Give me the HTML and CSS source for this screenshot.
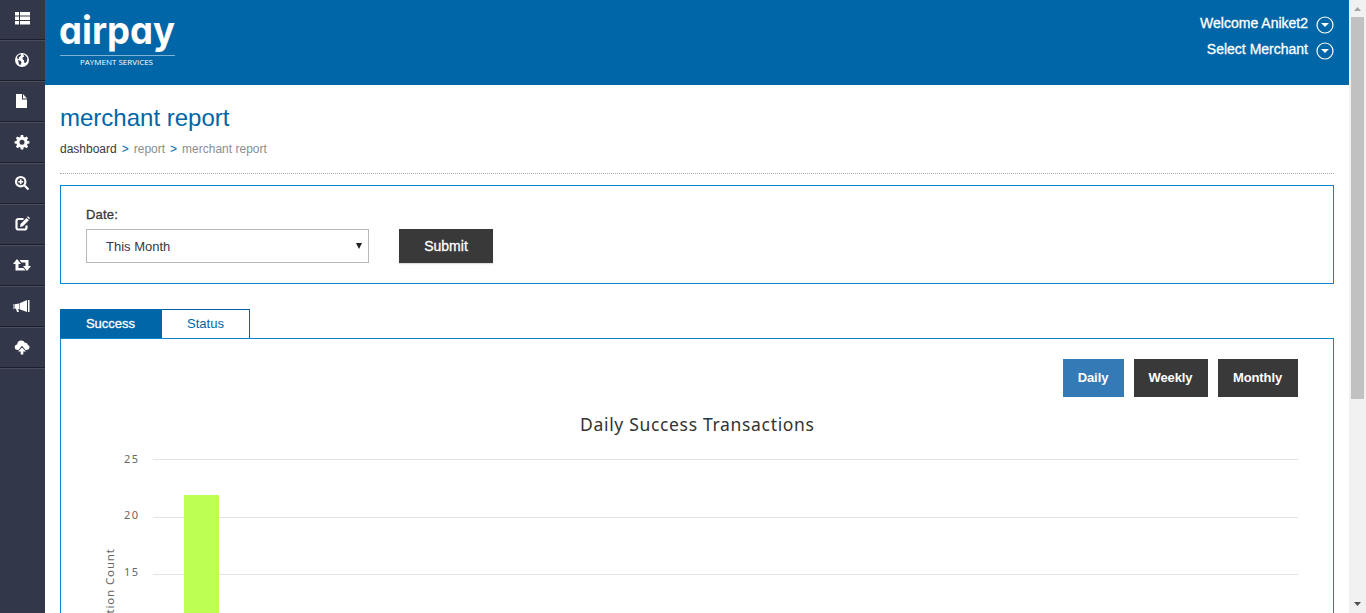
FILE: index.html
```html
<!DOCTYPE html>
<html lang="en">
<head>
<meta charset="utf-8">
<title>merchant report</title>
<link rel="stylesheet" href="styles.css">
</head>
<body>
<div class="app">
  <nav class="sidebar">
    <a class="nav-item"><svg class="icon" viewBox="0 0 16 16"><path d="M1 2h4v3.500H1zM6 2h10v3.500H6zM1 6.500h4V10H1zM6 6.500h10V10H6zM1 11h4v3.500H1zM6 11h10v3.500H6z"/></svg></a>
    <a class="nav-item"><svg class="icon" viewBox="0 0 16 16"><circle cx="8" cy="8" r="7"/><path class="cut" d="M3 5l1.500-2 2-.8.700 1L6 4.500 4.800 5.200 5 6.500 3.800 7.500zM9 2.200l2 .8 2.300 2.700-.3 3.500-1.800 2-1-.8-.2-2.200-1.500-1 .3-2 1.500-.8zM4 8l2.500.8 1 1.500-1.200 3L5 12.200z"/></svg></a>
    <a class="nav-item"><svg class="icon" viewBox="0 0 16 16"><path d="M2 1h6v5.500h5V15H2zM9 1l4 4.500H9z"/></svg></a>
    <a class="nav-item"><svg class="icon" viewBox="0 0 16 16"><path fill-rule="evenodd" d="M6.800 1h2.400l.4 2 1.200.5 1.700-1.100 1.600 1.600L13 5.700l.5 1.200 1.900.3v2.200l-1.900.4-.5 1.200 1.100 1.600-1.600 1.600-1.700-1.100-1.200.5-.4 1.800H6.800l-.4-1.800-1.200-.5-1.700 1.100-1.600-1.600L3 11l-.5-1.200-1.900-.4V7.200l1.900-.3L3 5.700 1.900 4l1.600-1.600 1.700 1.100L6.400 3zM8 5.800a2.500 2.500 0 1 0 0 5 2.500 2.500 0 0 0 0-5z"/></svg></a>
    <a class="nav-item"><svg class="icon" viewBox="0 0 16 16"><circle class="line" cx="6.700" cy="6.700" r="4.700"/><path class="line" d="M10.500 10.500l4 4"/><path class="line thin" d="M6.700 4.200v5M4.200 6.700h5"/></svg></a>
    <a class="nav-item"><svg class="icon" viewBox="0 0 16 16"><path class="line bold" d="M9.500 3H4.500Q2.500 3 2.500 5v6.500q0 2 2 2h6q2 0 2-2V9.500"/><path d="M6.500 8l6-6 2.400 2.200-6 6L6 11zM13 1l1-.7 2 2-.8 1z"/></svg></a>
    <a class="nav-item"><svg class="icon icon-wide" viewBox="0 0 18 16"><path d="M4 2l4 5H5.500v4h5l2 2.500h-10V7H0zM6.500 3h9v6H18l-4 5-4-5h2.500V5.500h-4z"/></svg></a>
    <a class="nav-item"><svg class="icon icon-wide" viewBox="0 0 18 16"><path d="M.5 6h1v5h-1zM2 6.200l4-.8v5.800l-1 .1 1 2.700H4l-1-3.200-1-.2zM6.500 5.300L14 2v12l-7.500-2.800zM15 2h1.500v12H15z"/></svg></a>
    <a class="nav-item"><svg class="icon" viewBox="0 0 16 16"><path d="M4 11Q.7 11 .7 8q0-2.300 2.600-2.800Q3.500 1.500 7.200 1.500q2.600 0 3.700 2.300 2.500-.4 2.800 1.900 1.900.6 1.800 2.600 0 2.700-3.500 2.700h-.5L8 6.800 4.500 11zM8 8.500l4 4H9.300v3H6.700v-3H4z"/></svg></a>
    <div class="nav-end"></div>
  </nav>
  <div class="page">
    <header class="topbar">
      <svg class="logo" width="120" height="60" viewBox="0 0 120 60">
        <text class="logo-name" x="-1" y="34" textLength="116" lengthAdjust="spacingAndGlyphs">airpay</text>
        <path class="logo-rule" d="M0 45.500h115"/>
        <text class="logo-tag" x="20" y="54.500" textLength="73" lengthAdjust="spacingAndGlyphs">PAYMENT SERVICES</text>
      </svg>
      <div class="account">
        <a class="account-row">Welcome Aniket2 <svg class="chev" viewBox="0 0 18 18"><circle cx="9" cy="9" r="8"/><path d="M5 7h8l-4 4z"/></svg></a>
        <a class="account-row">Select Merchant <svg class="chev" viewBox="0 0 18 18"><circle cx="9" cy="9" r="8"/><path d="M5 7h8l-4 4z"/></svg></a>
      </div>
    </header>
    <main class="content">
      <h1 class="title">merchant report</h1>
      <div class="crumbs"><span class="crumb-home">dashboard</span><span class="sep">&gt;</span><span>report</span><span class="sep">&gt;</span><span>merchant report</span></div>
      <section class="filter">
        <div class="field">
          <label class="label">Date:</label>
          <div class="select"><span>This Month</span><svg class="arrow" viewBox="0 0 6 6"><path d="M0 0h6L3 6z"/></svg></div>
        </div>
        <button class="submit">Submit</button>
      </section>
      <div class="tabs"><a class="tab tab-active">Success</a><a class="tab">Status</a></div>
      <section class="panel">
        <div class="ranges"><button class="range range-active">Daily</button><button class="range">Weekly</button><button class="range">Monthly</button></div>
        <svg class="chart" width="1202" height="400" viewBox="0 0 1202 400">
          <text class="chart-title" x="484" y="34" textLength="234">Daily Success Transactions</text>
          <path class="grid" d="M57 62.500h1145M57 120.500h1145M57 177.500h1145M57 234.500h1145"/>
          <text class="tick" x="28" y="66" textLength="14">25</text>
          <text class="tick" x="28" y="122" textLength="14">20</text>
          <text class="tick" x="28" y="179" textLength="14">15</text>
          <rect class="bar" x="88" y="98" width="35" height="252"/>
          <text class="axis" transform="translate(18 264) rotate(-90)" x="0" y="0" textLength="112">Transaction Count</text>
        </svg>
      </section>
    </main>
  </div>
  <div class="scrollbar">
    <svg class="scroll-arrow" viewBox="0 0 17 17"><path class="up" d="M5 11h7L8.500 7z"/></svg>
    <div class="thumb"></div>
    <svg class="scroll-arrow scroll-down" viewBox="0 0 17 17"><path class="down" d="M5 6h7l-3.500 4z"/></svg>
  </div>
</div>
</body>
</html>
```
FILE: styles.css
```css
* { box-sizing: border-box; }
body { margin: 0; height: 613px; overflow: hidden; background: #fff; color: #393939; font-family: "Liberation Sans", Arial, sans-serif; }
.app { display: flex; height: 613px; overflow: hidden; }
.sidebar { width: 45px; flex: none; background: #33374a; }
.nav-item { display: flex; align-items: center; justify-content: center; height: 41px; padding: 0 2px 2px 0; border-top: 1px solid #494c5d; border-bottom: 1px solid #1d202c; }
.nav-item:first-child { height: 40px; border-top: 0; padding-bottom: 3px; }
.nav-end { height: 1px; background: #494c5d; }
.icon { width: 16px; height: 16px; fill: #fff; }
.icon-wide { width: 18px; }
.icon .cut { fill: #33374a; }
.icon .line { fill: none; stroke: #fff; stroke-width: 2.2; }
.icon .thin { stroke-width: 1.6; }
.icon .bold { stroke-width: 2.2; }
.page { flex: 1; min-width: 0; }
.topbar { height: 85px; padding: 10px 15px; background: #0066a7; display: flex; justify-content: space-between; }
.logo { overflow: visible; }
.logo-name { font: 700 38px Inter, sans-serif; font-feature-settings: "cv11"; fill: #fff; }
.logo-rule { stroke: #7fb2d3; }
.logo-tag { font: 7px "Open Sans", sans-serif; fill: #fff; }
.account { color: #fff; font-size: 14px; -webkit-text-stroke: .3px #fff; }
.account-row { display: flex; justify-content: flex-end; align-items: center; height: 26px; gap: 8px; }
.chev { width: 18px; height: 18px; margin-top: 3px; fill: #fff; stroke: none; }
.chev circle { fill: none; stroke: #fff; stroke-width: 1.2; }
.content { padding: 0 15px; }
.title { margin: 0; padding-top: 18px; font-size: 24px; font-weight: 400; line-height: 30px; color: #0066a7; }
.crumbs { display: flex; height: 41px; padding-top: 8px; border-bottom: 1px dotted #aaa; font-size: 12px; line-height: 16px; color: #8d8d8d; }
.crumb-home { color: #393939; }
.sep { margin: 0 5px; color: #0066a7; font-size: 12px; }
.filter { display: flex; align-items: flex-start; gap: 30px; height: 99px; margin-top: 11px; padding: 20px 25px; border: 1px solid #0a84cf; }
.label { display: block; height: 23px; font-size: 13px; line-height: 18px; letter-spacing: .2px; -webkit-text-stroke: .3px #393939; }
.select { display: flex; align-items: center; justify-content: space-between; width: 283px; height: 34px; padding: 0 6px 0 19px; border: 1px solid #b8b8b8; font-size: 13px; }
.arrow { width: 6px; height: 6px; fill: #222; }
.submit { width: 94px; height: 34px; margin-top: 23px; padding: 0; border: 0; background: #393939; color: #fff; font: 14px "Liberation Sans", Arial, sans-serif; -webkit-text-stroke: .3px #fff; box-shadow: 0 1px 1px #ddd; }
.tabs { display: flex; height: 29px; margin-top: 25px; }
.tab { width: 88px; border: 1px solid #0066a7; border-width: 1px 1px 0 0; font-size: 13px; line-height: 28px; text-align: center; color: #0066a7; }
.tab-active { width: 102px; background: #0066a7; color: #fff; -webkit-text-stroke: .3px #fff; }
.panel { height: 400px; padding: 20px 35px; border: 1px solid #0a84cf; }
.ranges { display: flex; justify-content: flex-end; gap: 10px; }
.range { height: 38px; width: 74px; padding: 0 1px 2px 0; border: 0; background: #393939; color: #fff; font: 700 13px "Liberation Sans", Arial, sans-serif; letter-spacing: -.1px; }
.range-active { width: 61px; background: #337ab7; }
.range:last-child { width: 80px; }
.chart { display: block; }
.chart text { font-family: "Noto Sans", sans-serif; fill: #666; }
.chart .chart-title { font-size: 17.5px; fill: #333; }
.chart .tick { font-size: 11px; }
.chart .axis { font-size: 11.5px; }
.grid { stroke: #e3e3e3; }
.bar { fill: #beff54; }
.scrollbar { display: flex; flex-direction: column; width: 17px; flex: none; background: #f1f1f1; }
.scroll-arrow { width: 17px; height: 17px; }
.scroll-down { margin-top: auto; }
.up { fill: #a3a3a3; }
.down { fill: #505050; }
.thumb { width: 13px; height: 382px; margin-left: 2px; background: #c1c1c1; }
```
